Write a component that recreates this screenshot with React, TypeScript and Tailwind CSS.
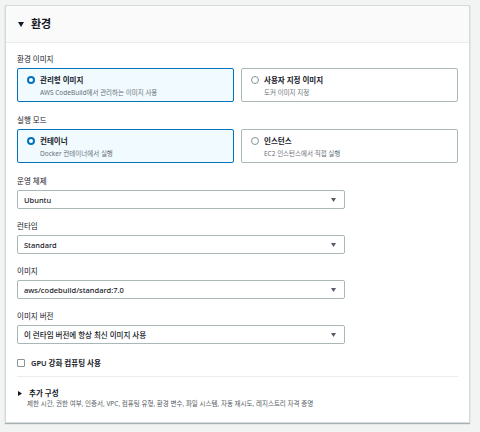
const FONT = '"Noto Sans", "Noto Sans CJK KR", sans-serif';

function FieldLabel({ children }: { children: React.ReactNode }) {
  return <p className="text-[7.5px] leading-[14px] text-[#16191f] mb-[2px]">{children}</p>;
}

function RadioTile({ title, sub, selected }: { title: string; sub: string; selected?: boolean }) {
  return (
    <div
      className={`h-[34px] rounded-[2px] border px-[9px] pt-[4px] ${
        selected ? 'border-[#0073bb] bg-[#f1faff]' : 'border-[#aab7b8] bg-white'
      }`}
    >
      <div className="flex items-center gap-[5px]">
        {selected ? (
          <span className="w-[8px] h-[8px] rounded-full border-[2.5px] border-[#0073bb] bg-white shrink-0" />
        ) : (
          <span className="w-[8px] h-[8px] rounded-full border border-[#879596] bg-white shrink-0" />
        )}
        <span className="text-[7.5px] leading-[14px] font-semibold text-[#16191f]">{title}</span>
      </div>
      <p className="pl-[13px] text-[6.5px] leading-[12px] text-[#687078]">{sub}</p>
    </div>
  );
}

function SelectBox({ value }: { value: string }) {
  return (
    <div className="w-[328px] h-[19px] rounded-[2px] border border-[#aab7b8] bg-white flex items-center justify-between pl-[6px] pr-[8px]">
      <span className="text-[7.5px] leading-[14px] font-medium text-[#16191f]">{value}</span>
      <svg width="5" height="4" viewBox="0 0 5 4">
        <path d="M0 0h5L2.5 4z" fill="#545b64" />
      </svg>
    </div>
  );
}

export default function App() {
  return (
    <div className="w-[480px] h-[432px] bg-[#f2f3f3] pt-[5px] pl-[5px]" style={{ fontFamily: FONT }}>
      <div className="w-[465px] h-[418px] bg-white border border-[#d5dbdb] shadow-[0_1px_1px_rgba(0,28,36,0.3)]">
        {/* Header */}
        <div className="h-[37px] bg-[#fafafa] border-b border-[#eaeded] flex items-center pl-[12px] gap-[7px]">
          <svg width="6" height="5" viewBox="0 0 6 5">
            <path d="M0 0h6L3 5z" fill="#16191f" />
          </svg>
          <span className="text-[11px] font-bold text-[#16191f]">환경</span>
        </div>

        <div className="px-[11px] pt-[9px]">
          <FieldLabel>환경 이미지</FieldLabel>
          <div className="grid grid-cols-2 gap-[7px]">
            <RadioTile title="관리형 이미지" sub="AWS CodeBuild에서 관리하는 이미지 사용" selected />
            <RadioTile title="사용자 지정 이미지" sub="도커 이미지 지정" />
          </div>

          <div className="mt-[11px]">
            <FieldLabel>실행 모드</FieldLabel>
            <div className="grid grid-cols-2 gap-[7px]">
              <RadioTile title="컨테이너" sub="Docker 컨테이너에서 실행" selected />
              <RadioTile title="인스턴스" sub="EC2 인스턴스에서 직접 실행" />
            </div>
          </div>

          <div className="mt-[11px]">
            <FieldLabel>운영 체제</FieldLabel>
            <SelectBox value="Ubuntu" />
          </div>
          <div className="mt-[10px]">
            <FieldLabel>런타임</FieldLabel>
            <SelectBox value="Standard" />
          </div>
          <div className="mt-[10px]">
            <FieldLabel>이미지</FieldLabel>
            <SelectBox value="aws/codebuild/standard:7.0" />
          </div>
          <div className="mt-[10px]">
            <FieldLabel>이미지 버전</FieldLabel>
            <SelectBox value="이 런타임 버전에 항상 최신 이미지 사용" />
          </div>

          <div className="mt-[12px] flex items-center gap-[6px]">
            <span className="w-[8px] h-[8px] rounded-[1px] border border-[#879596] bg-white" />
            <span className="text-[7.5px] leading-[14px] font-semibold text-[#16191f]">GPU 강화 컴퓨팅 사용</span>
          </div>

          <div className="mt-[6px] border-t border-[#eaeded] pt-[9px]">
            <div className="flex items-center gap-[7px] pl-[1px]">
              <svg width="4" height="5" viewBox="0 0 4 5">
                <path d="M0 0v5l4-2.5z" fill="#16191f" />
              </svg>
              <span className="text-[7.5px] leading-[14px] font-bold text-[#16191f]">추가 구성</span>
            </div>
            <p className="pl-[10px] -mt-[2px] text-[6.5px] leading-[12px] text-[#545b64]">
              제한 시간, 권한 여부, 인증서, VPC, 컴퓨팅 유형, 환경 변수, 파일 시스템, 자동 재시도, 레지스트리 자격 증명
            </p>
          </div>
        </div>
      </div>
    </div>
  );
}
